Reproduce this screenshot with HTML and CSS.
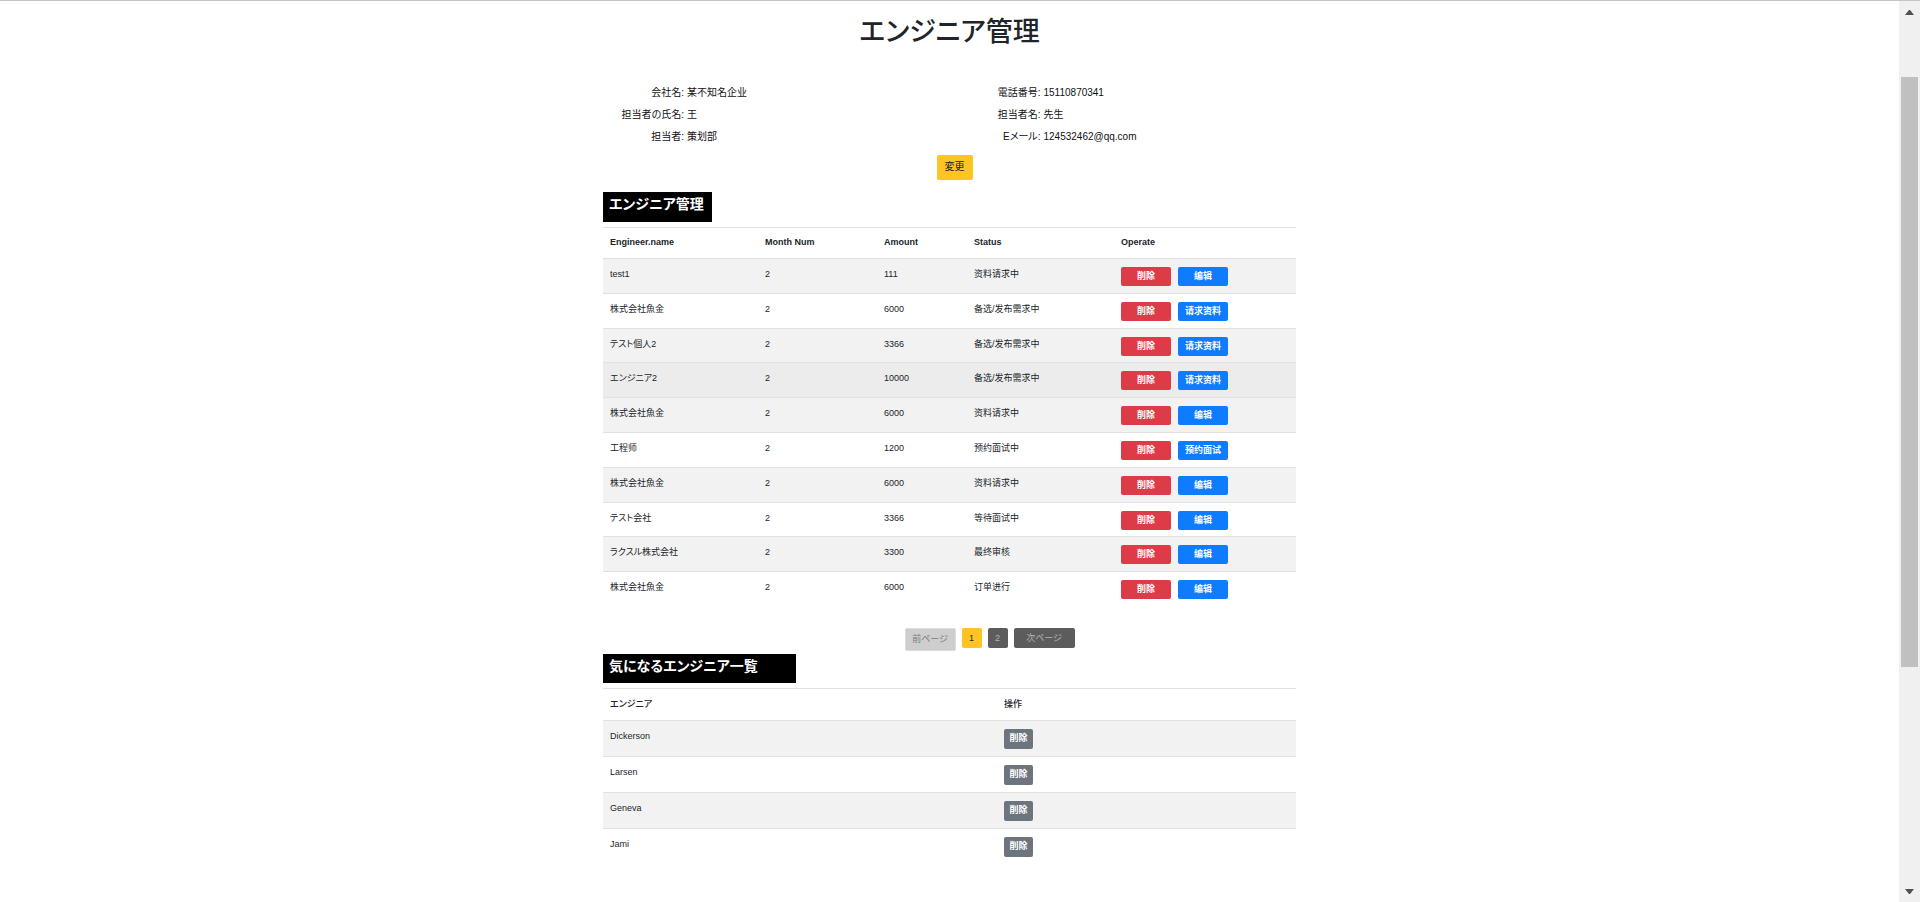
FILE: index.html
```html
<!DOCTYPE html>
<html lang="ja">
<head>
<meta charset="utf-8">
<title>エンジニア管理</title>
<link rel="stylesheet" href="styles.css">
</head>
<body>
<div class="page">
<main class="content">
  <h1 class="title">エンジニア管理</h1>

  <section class="info">
    <dl class="info-list">
      <dt>会社名:</dt><dd>某不知名企业</dd>
      <dt>担当者の氏名:</dt><dd>王</dd>
      <dt>担当者:</dt><dd>策划部</dd>
    </dl>
    <dl class="info-list info-list-wide">
      <dt>電話番号:</dt><dd>15110870341</dd>
      <dt>担当者名:</dt><dd>先生</dd>
      <dt>Eメール:</dt><dd>124532462@qq.com</dd>
    </dl>
  </section>
  <div class="info-actions"><button class="btn btn-edit" type="button">変更</button></div>

  <h2 class="label label-engineers">エンジニア管理</h2>
  <table class="table table-engineers">
    <colgroup><col class="c-name"><col class="c-month"><col class="c-amount"><col class="c-status"><col></colgroup>
    <thead>
      <tr><th>Engineer.name</th><th>Month Num</th><th>Amount</th><th>Status</th><th>Operate</th></tr>
    </thead>
    <tbody>
      <tr><td>test1</td><td>2</td><td>111</td><td>资料请求中</td><td><div class="ops"><button class="btn btn-red" type="button">削除</button><button class="btn btn-blue" type="button">编辑</button></div></td></tr>
      <tr><td>株式会社魚金</td><td>2</td><td>6000</td><td>备选/发布需求中</td><td><div class="ops"><button class="btn btn-red" type="button">削除</button><button class="btn btn-blue" type="button">请求资料</button></div></td></tr>
      <tr><td>テスト個人2</td><td>2</td><td>3366</td><td>备选/发布需求中</td><td><div class="ops"><button class="btn btn-red" type="button">削除</button><button class="btn btn-blue" type="button">请求资料</button></div></td></tr>
      <tr class="active"><td>エンジニア2</td><td>2</td><td>10000</td><td>备选/发布需求中</td><td><div class="ops"><button class="btn btn-red" type="button">削除</button><button class="btn btn-blue" type="button">请求资料</button></div></td></tr>
      <tr><td>株式会社魚金</td><td>2</td><td>6000</td><td>资料请求中</td><td><div class="ops"><button class="btn btn-red" type="button">削除</button><button class="btn btn-blue" type="button">编辑</button></div></td></tr>
      <tr><td>工程师</td><td>2</td><td>1200</td><td>预约面试中</td><td><div class="ops"><button class="btn btn-red" type="button">削除</button><button class="btn btn-blue" type="button">预约面试</button></div></td></tr>
      <tr><td>株式会社魚金</td><td>2</td><td>6000</td><td>资料请求中</td><td><div class="ops"><button class="btn btn-red" type="button">削除</button><button class="btn btn-blue" type="button">编辑</button></div></td></tr>
      <tr><td>テスト会社</td><td>2</td><td>3366</td><td>等待面试中</td><td><div class="ops"><button class="btn btn-red" type="button">削除</button><button class="btn btn-blue" type="button">编辑</button></div></td></tr>
      <tr><td>ラクスル株式会社</td><td>2</td><td>3300</td><td>最终审核</td><td><div class="ops"><button class="btn btn-red" type="button">削除</button><button class="btn btn-blue" type="button">编辑</button></div></td></tr>
      <tr><td>株式会社魚金</td><td>2</td><td>6000</td><td>订单进行</td><td><div class="ops"><button class="btn btn-red" type="button">削除</button><button class="btn btn-blue" type="button">编辑</button></div></td></tr>
    </tbody>
  </table>

  <nav class="pager">
    <button class="btn page-prev" type="button" disabled>前ページ</button>
    <button class="btn page-num page-current" type="button">1</button>
    <button class="btn page-num" type="button">2</button>
    <button class="btn page-num page-next" type="button">次ページ</button>
  </nav>

  <h2 class="label label-watch">気になるエンジニア一覧</h2>
  <table class="table table-watch">
    <colgroup><col class="c-person"><col></colgroup>
    <thead>
      <tr><th>エンジニア</th><th>操作</th></tr>
    </thead>
    <tbody>
      <tr><td>Dickerson</td><td><button class="btn btn-gray" type="button">削除</button></td></tr>
      <tr><td>Larsen</td><td><button class="btn btn-gray" type="button">削除</button></td></tr>
      <tr><td>Geneva</td><td><button class="btn btn-gray" type="button">削除</button></td></tr>
      <tr><td>Jami</td><td><button class="btn btn-gray" type="button">削除</button></td></tr>
    </tbody>
  </table>
</main>
<div class="scrollbar" aria-hidden="true">
  <svg class="arrow" viewBox="0 0 21 20"><path d="M6 14h9l-4-5h-1z"/></svg>
  <div class="gap-above"></div>
  <div class="thumb"></div>
  <div class="gap-below"></div>
  <svg class="arrow" viewBox="0 0 21 20"><path d="M6 7h9l-4 5h-1z"/></svg>
</div>
</div>
</body>
</html>
```
FILE: styles.css
```css
* { box-sizing: border-box; }

body {
  margin: 0;
  background: #fff;
  color: #212529;
  font-family: "Liberation Sans", "Noto Sans CJK JP", "Noto Sans CJK SC", sans-serif;
  font-size: 9px;
  line-height: 14px;
  font-feature-settings: "palt";
}

.page {
  display: flex;
  align-items: flex-start;
  min-height: 100vh;
  border-top: 1px solid #c4c4c4;
}

.content {
  flex: 0 1 693px;
  min-width: 0;
  margin: 0 auto;
}

.title {
  margin: 14px 0 33px;
  font-size: 27px;
  line-height: 34px;
  font-weight: 500;
  text-align: center;
}

.info {
  display: flex;
  color: #111;
  font-size: 10px;
}

.info-list {
  flex: 1;
  display: grid;
  grid-template-columns: 81px 1fr;
  grid-auto-rows: 22px;
  column-gap: 3px;
  align-items: center;
  margin: 0;
}

.info-list-wide { grid-template-columns: 91px 1fr; }

.info-list dt { text-align: right; white-space: nowrap; }

.info-list dd { margin: 0; }

.info-actions {
  padding: 7px 0 12px 10px;
  text-align: center;
}

.btn {
  border: 0;
  border-radius: 2px;
  padding: 0;
  font: inherit;
  font-feature-settings: inherit;
  color: #fff;
  white-space: nowrap;
}

.btn-edit {
  display: inline-block;
  padding: 5px 8px 6px;
  background: #ffc423;
  color: #212529;
  font-size: 10px;
  vertical-align: top;
}

.label {
  width: fit-content;
  margin: 0 0 5px;
  padding: 3px 6px 9px;
  background: #000;
  color: #fff;
  font-size: 14px;
  line-height: 18px;
  font-weight: 700;
}

.label-engineers { min-width: 109px; }

.label-watch { min-width: 193px; padding-bottom: 8px; }

.table {
  width: 100%;
  border-collapse: collapse;
  table-layout: fixed;
}

.table th,
.table td {
  padding: 8px 7px;
  border-top: 1px solid #dee2e6;
  text-align: left;
  vertical-align: top;
}

.table tbody tr:nth-child(odd) { background: #f2f2f2; }

.table tbody tr.active { background: #ececec; }

.table-engineers { height: 379px; }

.table-engineers th { padding: 7px 7px 9px; }

.table-engineers td { padding-bottom: 6px; }

.table-watch th { padding-bottom: 9px; font-weight: 500; }

.table-watch td { padding-bottom: 7px; }

.c-name { width: 155px; }
.c-month { width: 119px; }
.c-amount { width: 90px; }
.c-status { width: 147px; }
.c-person { width: 394px; }

.ops {
  display: flex;
  gap: 7px;
}

.ops .btn {
  width: 50px;
  padding: 2px 0 3px;
  font-weight: 700;
}

.btn-red { background: #dc3b47; }

.btn-blue { background: #0f7bff; }

.btn-gray {
  display: block;
  width: 29px;
  padding: 2px 0 4px;
  background: #6c757d;
  font-weight: 700;
}

.pager {
  display: flex;
  justify-content: center;
  align-items: flex-start;
  gap: 6px;
  margin: 22px 0 3px;
  padding-left: 80px;
}

.page-prev {
  padding: 3px 6px 4px;
  min-width: 51px;
  border: 1px solid #dadcde;
  background: #cecece;
  color: #777c81;
}

.page-num {
  min-width: 20px;
  padding: 3px 0;
  background: #5c5c5c;
  color: #b4b4b4;
}

.page-current { background: #ffc423; color: #212529; }

.page-next { min-width: 61px; }

.scrollbar {
  position: sticky;
  top: 0;
  flex: 0 0 21px;
  display: flex;
  flex-direction: column;
  align-items: center;
  height: calc(100vh - 1px);
  background: #f0f0f0;
}

.arrow { width: 21px; height: 20px; fill: #505050; }

.gap-above { flex: 56; }

.thumb { flex: 590; width: 17px; background: #c0c0c0; }

.gap-below { flex: 215; }
```
